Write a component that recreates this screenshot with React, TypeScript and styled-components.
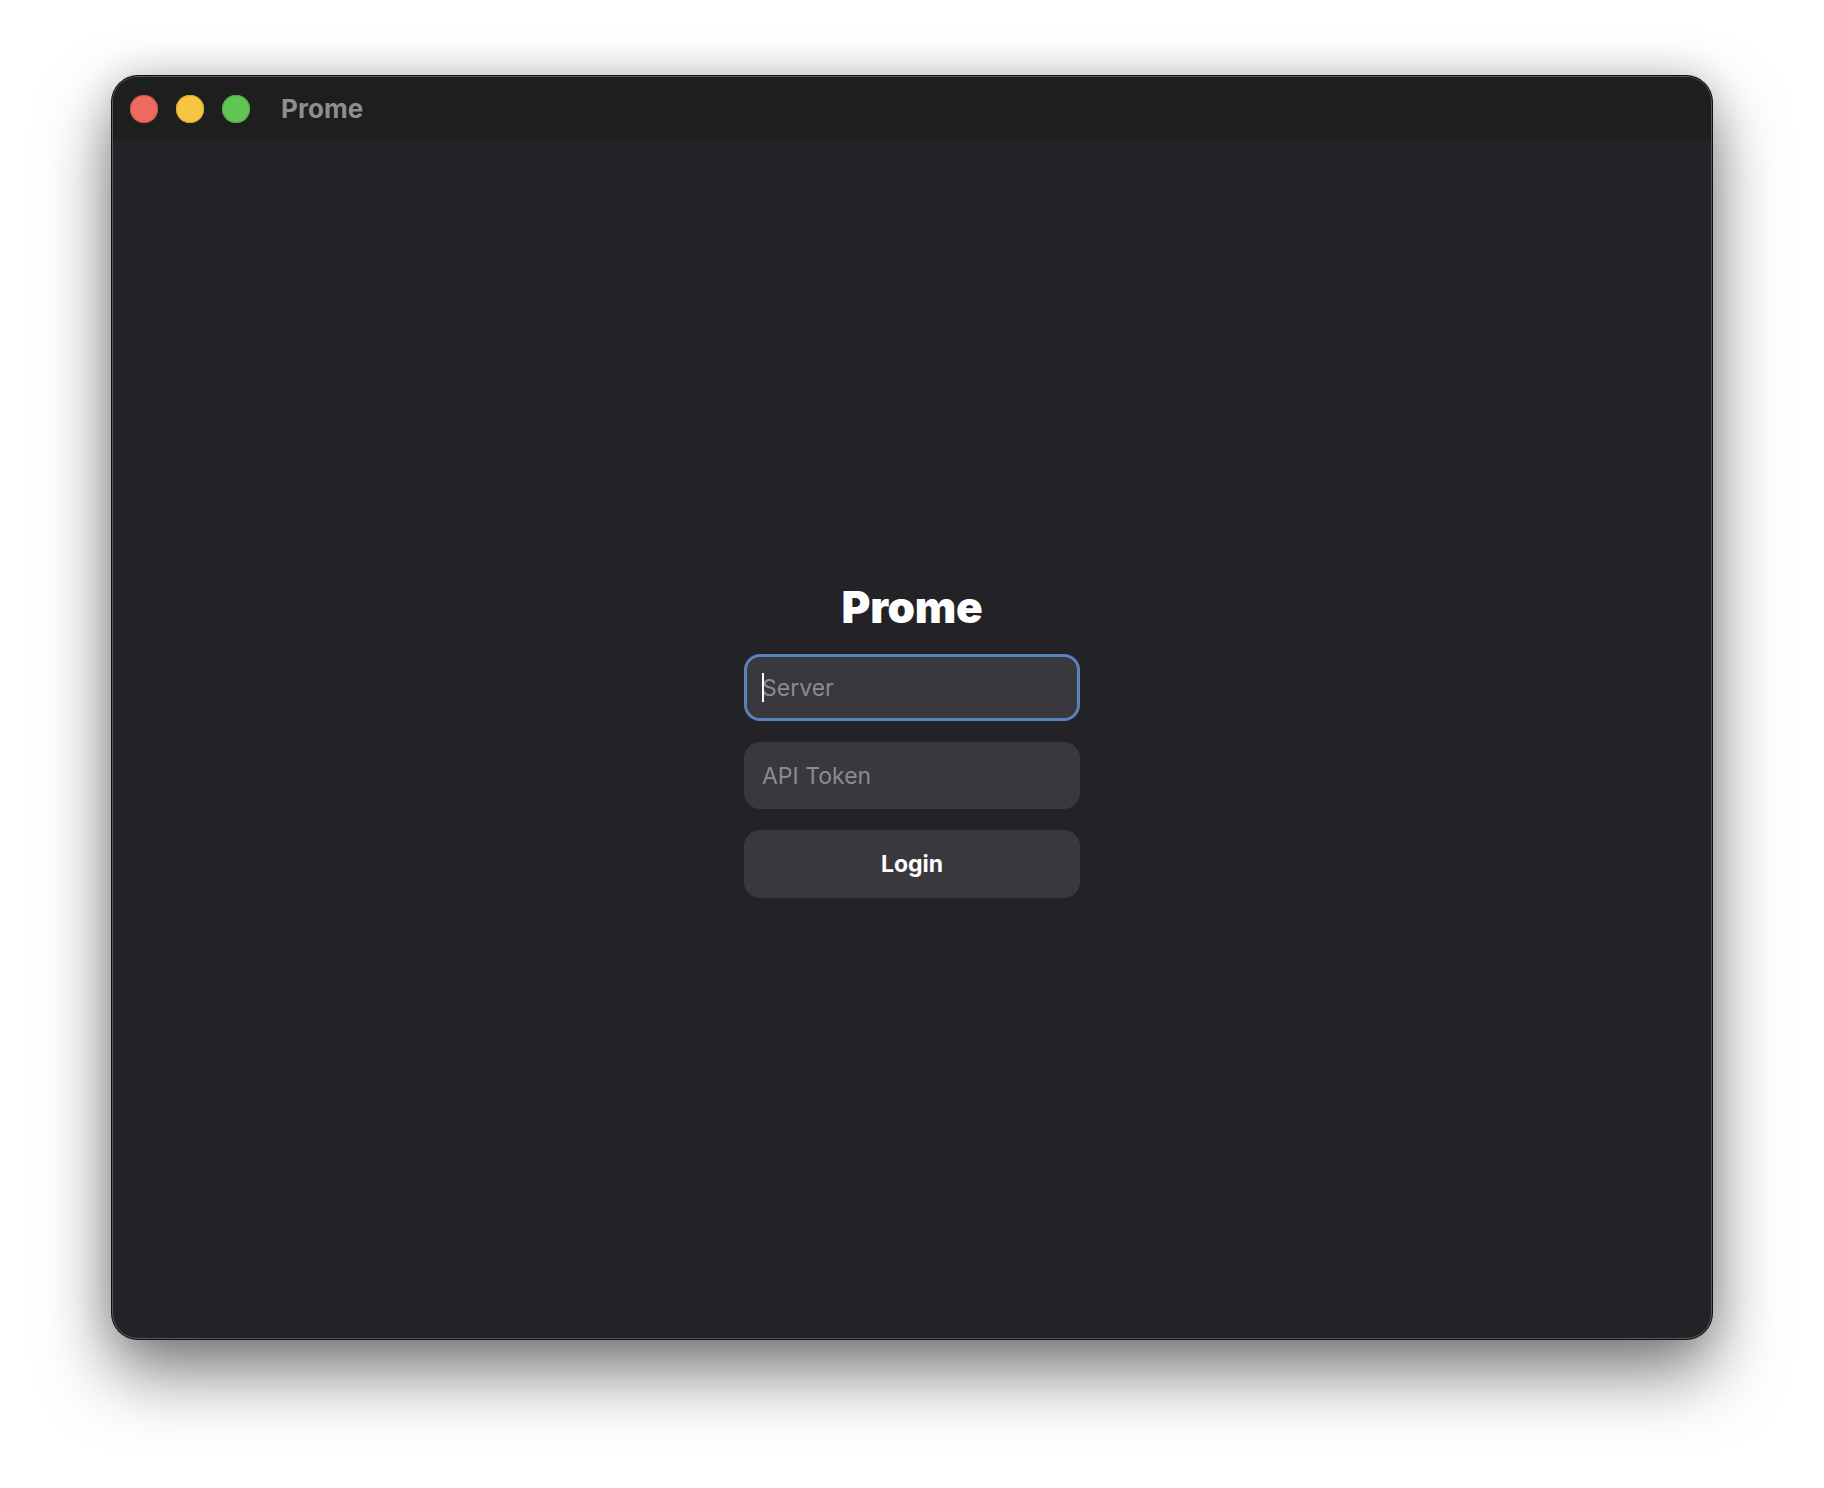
import React from 'react';
import styled, { createGlobalStyle } from 'styled-components';

const GlobalStyle = createGlobalStyle`
    html, body {
        margin: 0;
        padding: 0;
        background: #ffffff;
    }
    body {
        font-family: Inter, "Noto Sans", "Liberation Sans", sans-serif;
    }
`;

const Page = styled.div`
    display: flex;
    justify-content: center;
    align-items: flex-start;
    width: 1824px;
    height: 1488px;
    padding-top: 76px;
    box-sizing: border-box;
    background: #ffffff;
`;

const Window = styled.div`
    display: flex;
    flex-direction: column;
    width: 1600px;
    height: 1263px;
    border-radius: 26px;
    overflow: hidden;
    background: #222227;
    border: 1px solid #5a5a5e;
    box-sizing: border-box;
    box-shadow:
        0 0 0 1px #0e0e0e,
        0 34px 70px rgba(0, 0, 0, 0.5),
        0 0 40px rgba(0, 0, 0, 0.18);
`;

const TitleBar = styled.div`
    display: flex;
    align-items: center;
    height: 63px;
    padding-left: 17px;
    background: #1e1e1f;
    flex-shrink: 0;
`;

const Lights = styled.div`
    display: flex;
    gap: 18px;
`;

const Light = styled.span<{ $color: string; $edge: string }>`
    width: 28px;
    height: 28px;
    border-radius: 50%;
    background: ${p => p.$color};
    box-shadow: inset 0 0 0 1px ${p => p.$edge};
`;

const WindowTitle = styled.span`
    margin-left: 31px;
    font-size: 26px;
    font-weight: 700;
    color: #8e8e90;
    letter-spacing: 0.1px;
`;

const Content = styled.div`
    flex: 1;
    display: flex;
    align-items: center;
    justify-content: center;
`;

const Form = styled.form`
    display: flex;
    flex-direction: column;
    align-items: center;
    gap: 21px;
    width: 336px;
`;

const Heading = styled.h1`
    margin: 0 0 -1px;
    font-size: 44px;
    line-height: 54px;
    font-weight: 900;
    color: #ffffff;
    letter-spacing: -0.3px;
`;

const Field = styled.div`
    position: relative;
    width: 100%;
`;

const Input = styled.input<{ $focused?: boolean }>`
    display: block;
    width: 100%;
    height: 67px;
    box-sizing: border-box;
    padding: 0 15px;
    border-radius: 16px;
    border: 3.5px solid ${p => (p.$focused ? '#5a82bb' : 'transparent')};
    background: #38383d;
    color: #ffffff;
    font-family: Inter, "Noto Sans", "Liberation Sans", sans-serif;
    font-size: 23px;
    outline: none;

    &::placeholder {
        color: #8b8b90;
    }
`;

const Caret = styled.span`
    position: absolute;
    left: 18px;
    top: 19px;
    width: 2px;
    height: 29px;
    background: #ffffff;
`;

const Button = styled.button`
    width: 100%;
    height: 68px;
    border: none;
    border-radius: 16px;
    background: #38383d;
    color: #ffffff;
    font-family: Inter, "Noto Sans", "Liberation Sans", sans-serif;
    font-size: 23px;
    font-weight: 700;
    cursor: pointer;
`;

const App = () => {
    return (
        <>
            <GlobalStyle />
            <Page>
                <Window>
                    <TitleBar>
                        <Lights>
                            <Light $color="#ee6a5f" $edge="#d14f45" />
                            <Light $color="#f5c643" $edge="#d9a72c" />
                            <Light $color="#62c655" $edge="#4aa83f" />
                        </Lights>
                        <WindowTitle>Prome</WindowTitle>
                    </TitleBar>
                    <Content>
                        <Form onSubmit={e => e.preventDefault()}>
                            <Heading>Prome</Heading>
                            <Field>
                                <Input $focused placeholder="Server" />
                                <Caret />
                            </Field>
                            <Field>
                                <Input placeholder="API Token" />
                            </Field>
                            <Button type="submit">Login</Button>
                        </Form>
                    </Content>
                </Window>
            </Page>
        </>
    );
};

export default App;
